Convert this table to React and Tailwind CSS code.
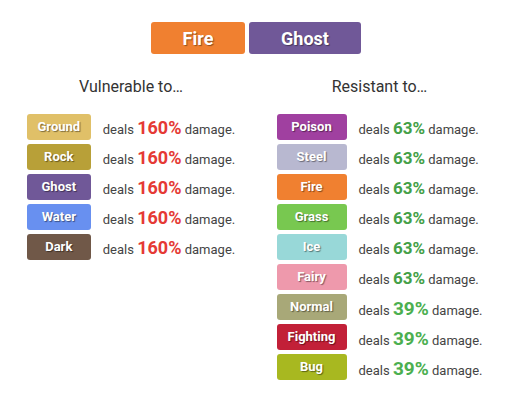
import React from "react";

const TYPE_COLORS = {
  Fire: "bg-[#f08030]",
  Ghost: "bg-[#705898]",
  Ground: "bg-[#e0c068]",
  Rock: "bg-[#b8a038]",
  Water: "bg-[#6890f0]",
  Dark: "bg-[#705848]",
  Poison: "bg-[#a040a0]",
  Steel: "bg-[#b8b8d0]",
  Grass: "bg-[#78c850]",
  Ice: "bg-[#98d8d8]",
  Fairy: "bg-[#ee99ac]",
  Normal: "bg-[#a8a878]",
  Fighting: "bg-[#c22038]",
  Bug: "bg-[#a8b820]",
};

const vulnerable = [
  { type: "Ground", pct: 160 },
  { type: "Rock", pct: 160 },
  { type: "Ghost", pct: 160 },
  { type: "Water", pct: 160 },
  { type: "Dark", pct: 160 },
];

const resistant = [
  { type: "Poison", pct: 63 },
  { type: "Steel", pct: 63 },
  { type: "Fire", pct: 63 },
  { type: "Grass", pct: 63 },
  { type: "Ice", pct: 63 },
  { type: "Fairy", pct: 63 },
  { type: "Normal", pct: 39 },
  { type: "Fighting", pct: 39 },
  { type: "Bug", pct: 39 },
];

const TypeRow = ({ type, pct, badgeWidth }) => {
  let pctClass = "text-[#e53935] text-[18px]";
  if (pct === 63) pctClass = "text-[#43a047] text-[17px]";
  if (pct === 39) pctClass = "text-[#4caf50] text-[19px]";

  return (
    <div className="flex items-center gap-3 h-[26px]">
      <div
        className={`${TYPE_COLORS[type]} ${badgeWidth} h-[26px] rounded-[3px] flex items-center justify-center pb-[1px] text-white text-[13px] font-bold [text-shadow:1px_1px_1px_rgba(0,0,0,0.45)]`}
      >
        {type}
      </div>
      <div className="text-[13px] text-[#444] leading-none whitespace-nowrap pt-[2px]">
        deals <span className={`font-bold ${pctClass}`}>{pct}%</span> damage.
      </div>
    </div>
  );
};

const App = () => {
  return (
    <div className="w-[512px] h-[405px] bg-white pt-[22px] font-['Roboto',sans-serif]">
      <div className="flex justify-center gap-1">
        <div className="bg-[#f08030] w-[94px] h-8 rounded-[3px] flex items-center justify-center text-white text-[18px] font-bold [text-shadow:1px_1px_1px_rgba(0,0,0,0.4)]">
          Fire
        </div>
        <div className="bg-[#705898] w-[112px] h-8 rounded-[3px] flex items-center justify-center text-white text-[18px] font-bold [text-shadow:1px_1px_1px_rgba(0,0,0,0.4)]">
          Ghost
        </div>
      </div>

      <div className="grid grid-cols-2 px-[6px] mt-[22px]">
        <div className="flex flex-col items-center">
          <h2 className="text-[16px] text-[#333] leading-[22px] mb-[16px]">
            Vulnerable to…
          </h2>
          <div className="flex flex-col gap-1">
            {vulnerable.map((v) => (
              <TypeRow key={v.type} {...v} badgeWidth="w-[64px]" />
            ))}
          </div>
        </div>

        <div className="flex flex-col items-center pr-[3px]">
          <h2 className="text-[16px] text-[#333] leading-[22px] mb-[16px]">
            Resistant to…
          </h2>
          <div className="flex flex-col gap-1">
            {resistant.map((r) => (
              <TypeRow key={r.type} {...r} badgeWidth="w-[70px]" />
            ))}
          </div>
        </div>
      </div>
    </div>
  );
};

export default App;
